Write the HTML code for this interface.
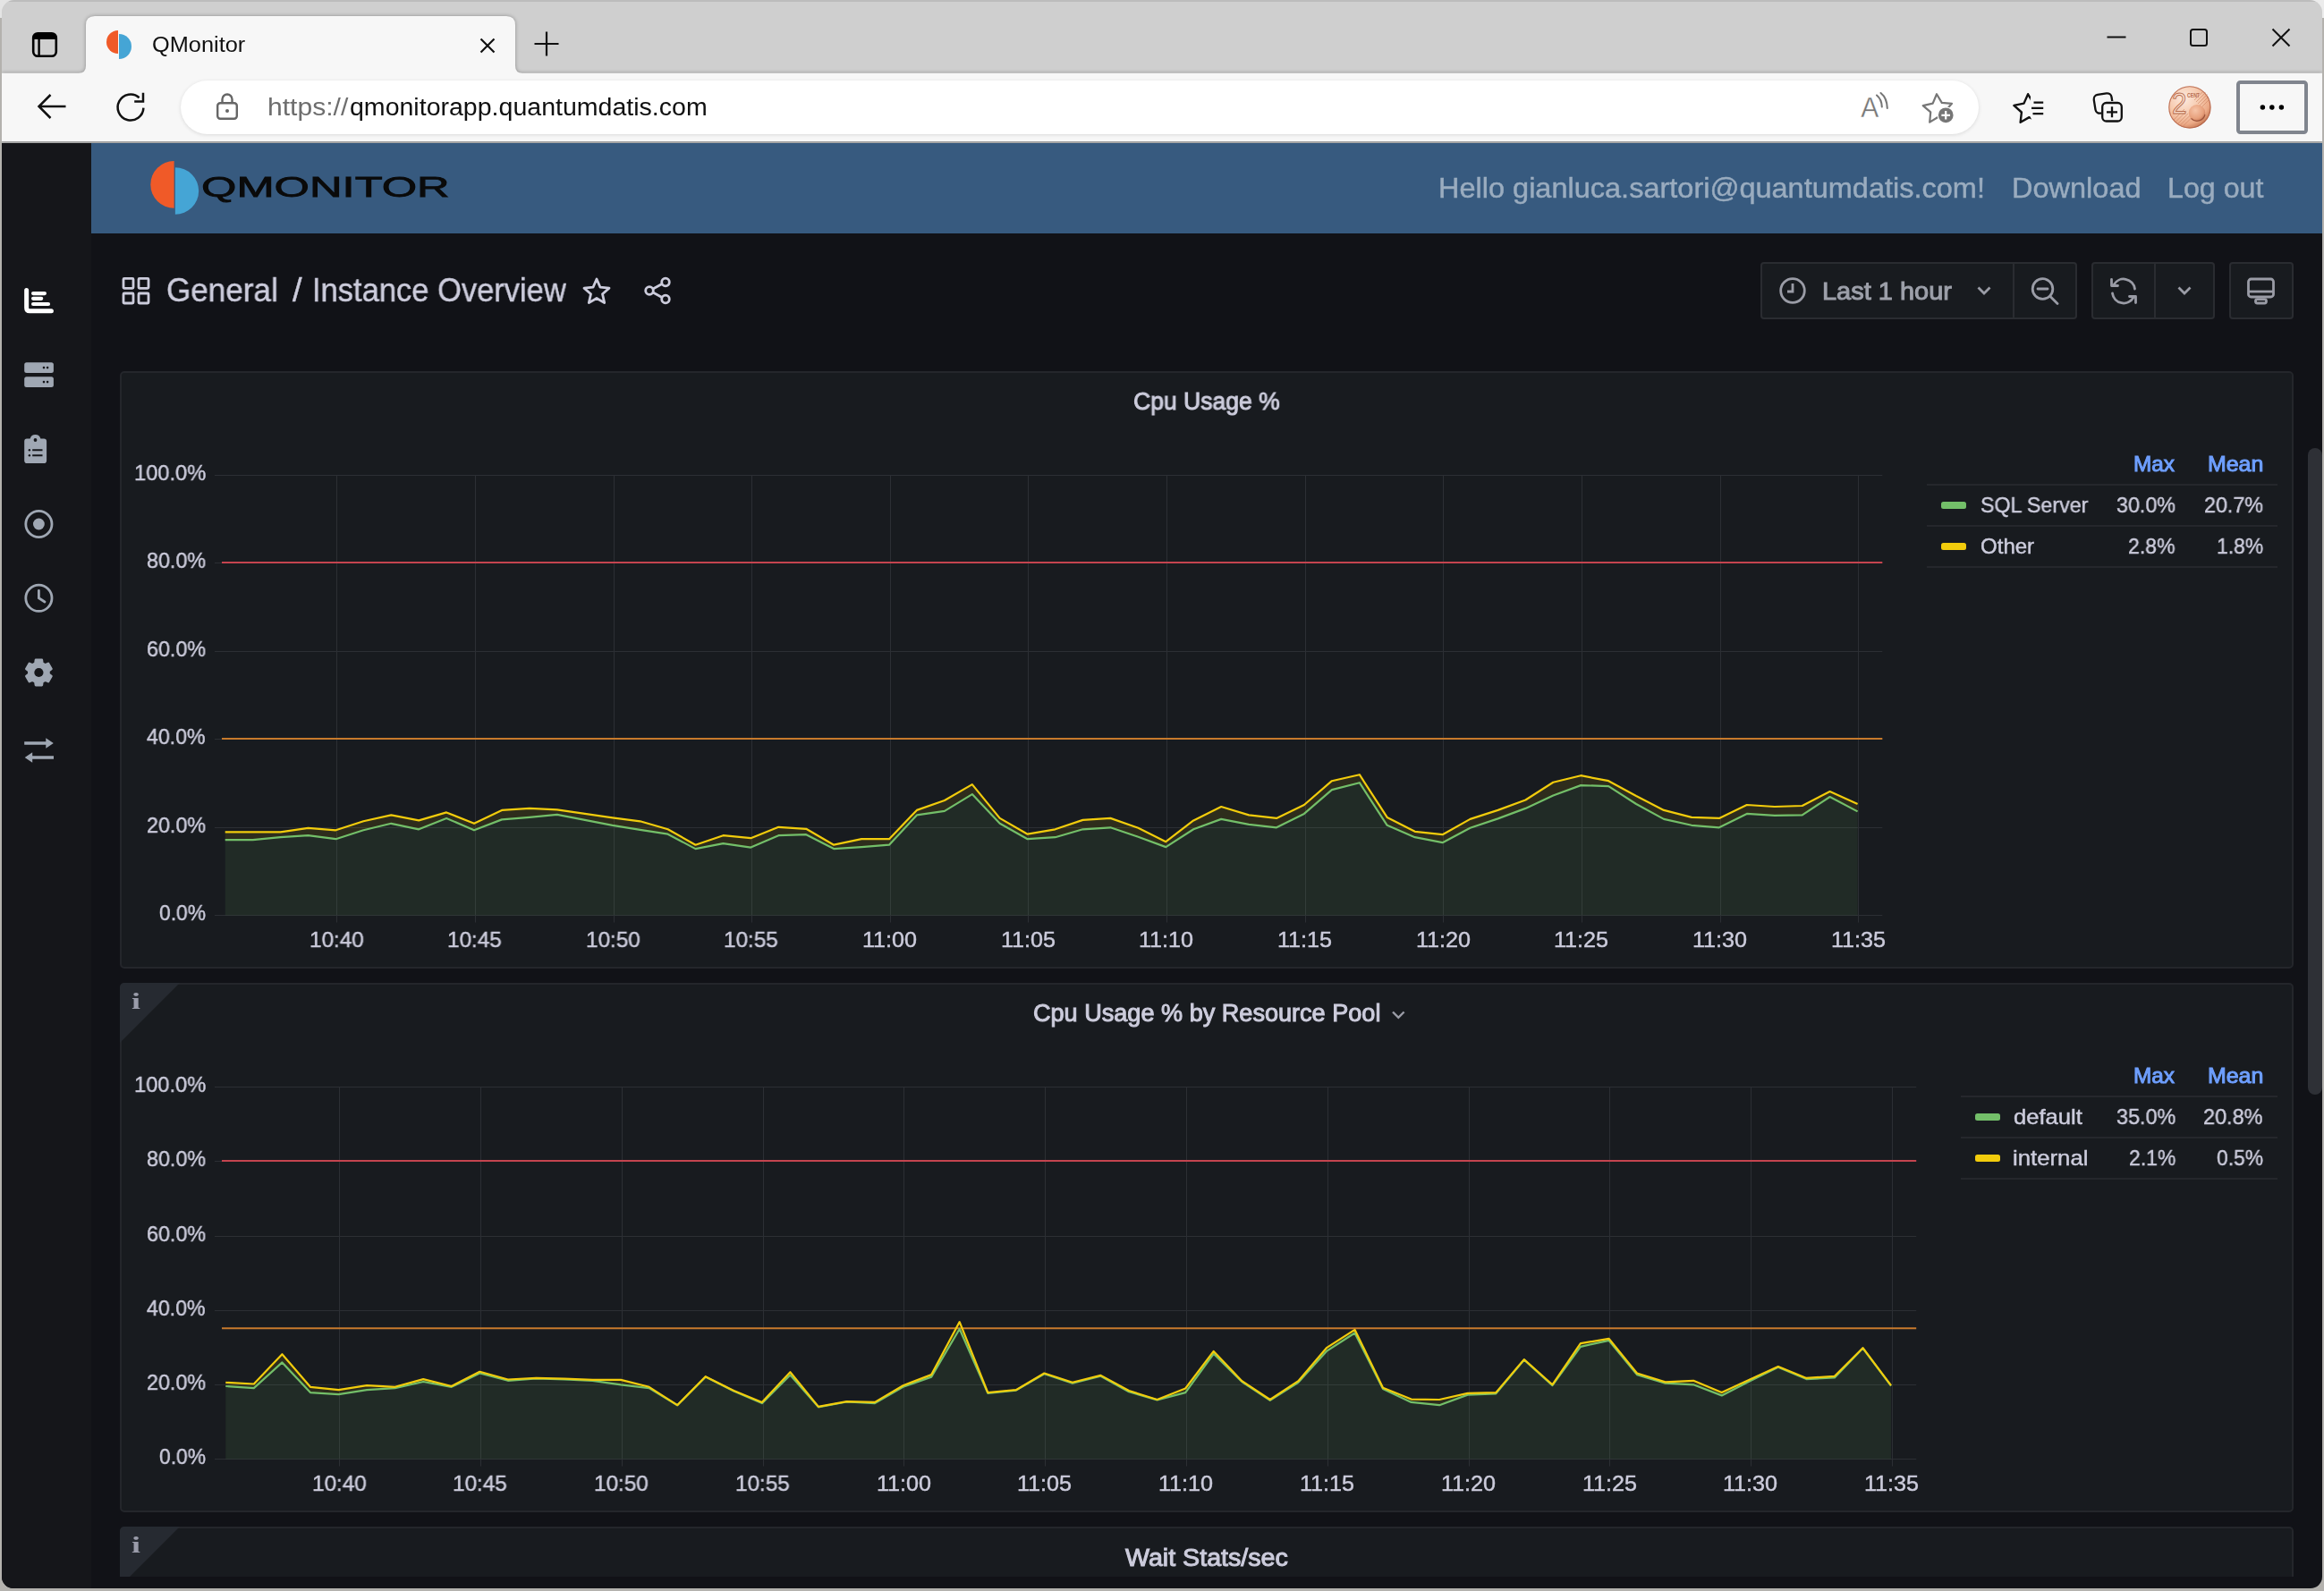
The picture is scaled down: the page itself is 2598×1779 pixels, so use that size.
<!DOCTYPE html>
<html lang="en"><head><meta charset="utf-8"><title>QMonitor</title>
<style>
html,body{margin:0;padding:0;}
body{width:2598px;height:1779px;position:relative;overflow:hidden;background:#b4b2ae;font-family:"Liberation Sans", Arial, sans-serif;}
.a{position:absolute;display:block;}
.t{position:absolute;white-space:nowrap;line-height:1;will-change:transform;}
</style></head>
<body>
<div class="a" style="left:0.0px;top:0.0px;width:20.0px;height:20.0px;background:#e4e4e4;"></div>
<div class="a" style="left:2578.0px;top:0.0px;width:20.0px;height:20.0px;background:#ececec;"></div>
<div class="a" id="win" style="left:2px;top:0;width:2594px;height:1776px;border-radius:14px 14px 13px 13px;overflow:hidden;background:linear-gradient(#bcbcbc 0,#bcbcbc 2px,#cfcfcf 2px,#cfcfcf 120px,#111217 120px);"></div>
<div id="browser-chrome">
<div class="a" style="left:2.0px;top:2.0px;width:2594.0px;height:80.0px;background:#cfcfcf;border-radius:13px 13px 0 0;"></div>
<div class="a" style="left:2.0px;top:158.0px;width:2594.0px;height:2.0px;background:#b9b9b9;"></div>
<svg class="a" style="left:2.0px;top:14.0px;overflow:hidden;" width="2594" height="146" viewBox="0 0 2594 146"><path d="M0 67.7 H86 Q94 67.7 94 59.7 V14 Q94 4 104 4 H564 Q574 4 574 14 V59.7 Q574 67.7 582 67.7 H2594 V144 H0 Z" fill="#f7f7f7" style="filter:drop-shadow(0 0 2.2px rgba(0,0,0,.33))"/></svg>
<svg class="a" style="left:34.0px;top:34.0px;" width="32" height="32" viewBox="0 0 32 32"><rect x="3.2" y="3.2" width="25.6" height="25.6" rx="5" fill="none" stroke="#000" stroke-width="2.6"/><path d="M3 10 L3 8 Q3 3 8 3 L24 3 Q29 3 29 8 L29 10 Z" fill="#000"/><line x1="9.6" y1="9" x2="9.6" y2="28" stroke="#000" stroke-width="2.4"/></svg>
<svg class="a" style="left:116.0px;top:30.0px;" width="36" height="40" viewBox="0 0 36 40"><path d="M16 4 A13 13 0 0 0 16 30 Z" fill="#f05a28"/><path d="M17 8 A13.5 13.5 0 0 1 17 36 Z" fill="#45a5d5"/></svg>
<div id="t1" class="t" style="left:169.52px;transform-origin:0 0;top:39px;font-size:23.5px;color:#111;font-weight:400;transform:scaleX(1.0785);">QMonitor</div>
<svg class="a" style="left:535.0px;top:41.0px;" width="20" height="20" viewBox="0 0 20 20"><path d="M2.5 2.5 L17.5 17.5 M17.5 2.5 L2.5 17.5" stroke="#111" stroke-width="2.2" fill="none"/></svg>
<svg class="a" style="left:596.0px;top:34.0px;" width="30" height="30" viewBox="0 0 30 30"><path d="M15 1.5 V28.5 M1.5 15 H28.5" stroke="#111" stroke-width="2.2" fill="none"/></svg>
<svg class="a" style="left:2354.0px;top:30.0px;" width="24" height="24" viewBox="0 0 24 24"><path d="M1.5 11.5 H22.5" stroke="#111" stroke-width="2" fill="none"/></svg>
<svg class="a" style="left:2446.0px;top:30.0px;" width="24" height="24" viewBox="0 0 24 24"><rect x="3" y="3" width="18" height="18" rx="2.5" stroke="#111" stroke-width="2" fill="none"/></svg>
<svg class="a" style="left:2538.0px;top:30.0px;" width="24" height="24" viewBox="0 0 24 24"><path d="M2.5 2.5 L21.5 21.5 M21.5 2.5 L2.5 21.5" stroke="#111" stroke-width="2" fill="none"/></svg>
<svg class="a" style="left:40.0px;top:103.0px;" width="36" height="32" viewBox="0 0 36 32"><path d="M33.5 16 H3.5 M16.5 3 L3.5 16 L16.5 29" stroke="#111" stroke-width="2.5" fill="none" stroke-linejoin="miter"/></svg>
<svg class="a" style="left:128.0px;top:102.0px;" width="38" height="38" viewBox="0 0 38 38"><path d="M32.4 18.6 A14.4 14.4 0 1 1 27.6 7.3" stroke="#111" stroke-width="2.5" fill="none"/><path d="M22.2 11.6 H32 V1.8" stroke="#111" stroke-width="2.5" fill="none"/></svg>
<div class="a" style="left:202.0px;top:90.0px;width:2010.0px;height:60.0px;background:#ffffff;border-radius:30px;box-shadow:0 1px 4px rgba(0,0,0,.12);"></div>
<svg class="a" style="left:240.0px;top:103.0px;" width="28" height="32" viewBox="0 0 28 32"><rect x="3.2" y="12.2" width="21.6" height="17.6" rx="3" stroke="#666" stroke-width="2.4" fill="none"/><path d="M8.5 12 V8 A5.5 5.5 0 0 1 19.5 8 V12" stroke="#666" stroke-width="2.4" fill="none"/><circle cx="14" cy="21" r="2" fill="#666"/></svg>
<div id="t2" class="t" style="left:299.17px;transform-origin:0 0;top:107px;font-size:27px;color:#6e6e6e;font-weight:400;transform:scaleX(1.1139);">https://</div>
<div id="t3" class="t" style="left:390.94px;transform-origin:0 0;top:107px;font-size:27px;color:#101010;font-weight:400;transform:scaleX(1.0567);">qmonitorapp.quantumdatis.com</div>
<svg class="a" style="left:2076.0px;top:100.0px;" width="40" height="38" viewBox="0 0 40 38"><text x="4.2" y="31.3" font-family="Liberation Sans, sans-serif" font-size="32" fill="#767676" stroke="#fff" stroke-width="0.35" textLength="20" lengthAdjust="spacingAndGlyphs">A</text><path d="M22 6.5 Q27.5 11 27.8 19.5 M26.5 4 Q33.5 9.5 33.8 21" stroke="#767676" stroke-width="2.1" fill="none" stroke-linecap="round"/></svg>
<svg class="a" style="left:2146.0px;top:100.0px;" width="42" height="42" viewBox="0 0 42 42"><path d="M19.01 5.24 L24.76 14.91 L35.96 15.83 L28.54 24.28 L31.13 35.22 L20.80 30.78 L11.19 36.62 L12.23 25.42 L3.70 18.09 L14.67 15.61 Z" stroke="#767676" stroke-width="2.2" fill="none" stroke-linejoin="round"/><circle cx="29.2" cy="28.8" r="9.6" fill="#fff"/><circle cx="29.2" cy="28.8" r="8.4" fill="#767676"/><path d="M29.2 24 V33.6 M24.4 28.8 H34" stroke="#fff" stroke-width="2.2" fill="none"/></svg>
<svg class="a" style="left:2248.0px;top:100.0px;" width="42" height="40" viewBox="0 0 42 40"><defs><clipPath id="fvc"><path d="M0 0 H26.5 L22 9 L20 27 L26 40 H0 Z"/></clipPath></defs><path d="M19.10 5.22 L24.74 15.10 L36.06 16.24 L28.40 24.65 L30.82 35.77 L20.46 31.09 L10.63 36.83 L11.88 25.52 L3.39 17.95 L14.52 15.64 Z" stroke="#111" stroke-width="2.4" fill="none" stroke-linejoin="round" clip-path="url(#fvc)"/><path d="M25.5 14.6 H36.2 M23 20.9 H36.2 M24.5 27.2 H36.2" stroke="#111" stroke-width="2.3" fill="none"/></svg>
<svg class="a" style="left:2337.0px;top:100.0px;" width="40" height="40" viewBox="0 0 40 40"><rect x="4.5" y="5" width="20" height="21" rx="5" transform="rotate(-9 14.5 15.5)" stroke="#111" stroke-width="2.3" fill="none"/><rect x="12" y="13" width="24" height="23.5" rx="5.5" fill="#f7f7f7"/><rect x="13.2" y="15" width="21.6" height="20.5" rx="4.5" stroke="#111" stroke-width="2.3" fill="#f7f7f7"/><path d="M24 19.3 V31.3 M18 25.3 H30" stroke="#111" stroke-width="2.3" fill="none"/></svg>
<svg class="a" style="left:2420.0px;top:92.0px;" width="56" height="56" viewBox="0 0 56 56"><defs><radialGradient id="cg" cx="36%" cy="30%" r="75%"><stop offset="0" stop-color="#fdeadf"/><stop offset="0.5" stop-color="#f6c9ad"/><stop offset="0.8" stop-color="#ecab88"/><stop offset="0.95" stop-color="#d08560"/><stop offset="1" stop-color="#a8573d"/></radialGradient><radialGradient id="gg" cx="40%" cy="35%" r="70%"><stop offset="0" stop-color="#f6c4a8"/><stop offset="0.7" stop-color="#e7a07c"/><stop offset="1" stop-color="#c47655"/></radialGradient></defs><circle cx="27.9" cy="27.9" r="23.6" fill="url(#cg)"/><circle cx="27.9" cy="27.9" r="23.1" fill="none" stroke="#b4644a" stroke-width="1.1" opacity=".85"/><g stroke="#c77c5b" stroke-width="0.7" opacity=".75"><path d="M33 20 L43 10 M35 22 L45.5 11.5 M37 24 L47.5 13.5 M39 26 L49 16 M41 28 L50 19 M10 42 L22 30 M12.5 44 L24 32.5 M15 46 L26 35 M17.5 47.8 L28 37.3 M20 49.5 L30 39.5"/></g><circle cx="36" cy="34.2" r="9.2" fill="url(#gg)"/><path d="M29.5 40.5 A9.2 9.2 0 0 0 45 36" stroke="#8f4630" stroke-width="1.2" fill="none" opacity=".8"/><text x="8" y="34.6" font-family="Liberation Sans, sans-serif" font-size="34" fill="#fbe0d0" fill-opacity=".8" stroke="#b76c4d" stroke-width="1" textLength="16.5" lengthAdjust="spacingAndGlyphs">2</text><text x="25" y="17" font-family="Liberation Sans, sans-serif" font-size="8" font-weight="700" fill="#b76c4d" textLength="14" lengthAdjust="spacingAndGlyphs">CENT</text></svg>
<div class="a" style="left:2500.0px;top:90.0px;width:80.0px;height:60.0px;background:transparent;border:4px solid #80858e;box-sizing:border-box;border-radius:4.5px;"></div>
<svg class="a" style="left:2520.0px;top:113.0px;" width="40" height="14" viewBox="0 0 40 14"><circle cx="9.4" cy="7" r="2.75" fill="#000"/><circle cx="19.8" cy="7" r="2.75" fill="#000"/><circle cx="30.4" cy="7" r="2.75" fill="#000"/></svg>
</div>
<div id="app">
<nav id="sidebar" aria-label="Main menu">
<div class="a" style="left:2.0px;top:160.0px;width:100.0px;height:1616.0px;background:#15161a;border-radius:0 0 0 13px;"></div>
<svg class="a" style="left:26.0px;top:320.0px;" width="36" height="32" viewBox="0 0 36 32"><path d="M3.65 4.4 V24.2 Q3.65 27.76 7.2 27.76 H31.4" stroke="#fff" stroke-width="5" fill="none" stroke-linecap="round"/><path d="M11.1 8.07 H23.9 M11.1 13.8 H20.2 M11.1 20 H28" stroke="#fff" stroke-width="4.2" fill="none" stroke-linecap="round"/></svg>
<svg class="a" style="left:26.0px;top:404.0px;" width="36" height="30" viewBox="0 0 36 30"><rect x="1.2" y="1.2" width="32.7" height="11.8" rx="2.5" fill="#9fa7b3"/><rect x="1.2" y="17.2" width="32.7" height="11.9" rx="2.5" fill="#9fa7b3"/><circle cx="23" cy="7.1" r="1.3" fill="#15161a"/><circle cx="27.1" cy="7.1" r="1.3" fill="#15161a"/><circle cx="23" cy="23.1" r="1.3" fill="#15161a"/><circle cx="27.1" cy="23.1" r="1.3" fill="#15161a"/></svg>
<svg class="a" style="left:26.0px;top:485.0px;" width="28" height="34" viewBox="0 0 28 34"><path d="M4 5.4 H7.6 A6.2 6.2 0 0 1 19.4 5.4 H23 Q26.1 5.4 26.1 8.5 V29.9 Q26.1 33 23 33 H4.3 Q1.2 33 1.2 29.9 V8.5 Q1.2 5.4 4 5.4 Z" fill="#9fa7b3"/><circle cx="13.5" cy="7" r="1.9" fill="#15161a"/><circle cx="6.9" cy="18.3" r="1.2" fill="#15161a"/><circle cx="6.9" cy="24.3" r="1.2" fill="#15161a"/><path d="M10.2 18.3 H21.5 M10.2 24.3 H21.5" stroke="#15161a" stroke-width="2.1" fill="none"/></svg>
<svg class="a" style="left:26.0px;top:569.0px;" width="36" height="36" viewBox="0 0 36 36"><circle cx="17.4" cy="17" r="14.6" stroke="#9fa7b3" stroke-width="2.8" fill="none"/><circle cx="17.4" cy="17" r="6.4" fill="#9fa7b3"/></svg>
<svg class="a" style="left:26.0px;top:652.0px;" width="36" height="36" viewBox="0 0 36 36"><circle cx="17.4" cy="16.8" r="14.6" stroke="#9fa7b3" stroke-width="2.8" fill="none"/><path d="M17.4 8.3 V16.8 L24 21" stroke="#9fa7b3" stroke-width="2.8" fill="none" stroke-linecap="round"/></svg>
<svg class="a" style="left:26.0px;top:734.0px;" width="36" height="36" viewBox="0 0 36 36"><path d="M13.45 7.52 L13.96 3.81 L20.84 3.81 L21.35 7.52 L24.50 9.34 L27.97 7.93 L31.41 13.88 L28.45 16.18 L28.45 19.82 L31.41 22.12 L27.97 28.07 L24.50 26.66 L21.35 28.48 L20.84 32.19 L13.96 32.19 L13.45 28.48 L10.30 26.66 L6.83 28.07 L3.39 22.12 L6.35 19.82 L6.35 16.18 L3.39 13.88 L6.83 7.93 L10.30 9.34 Z" fill="#9fa7b3" stroke="#9fa7b3" stroke-width="2.6" stroke-linejoin="round"/><circle cx="17.4" cy="18" r="5.1" fill="#15161a"/></svg>
<svg class="a" style="left:26.0px;top:824.0px;" width="36" height="32" viewBox="0 0 36 32"><path d="M1.2 7 H27 M9 23 H34" stroke="#9fa7b3" stroke-width="3.4" fill="none"/><path d="M25.3 1.2 L33.8 7 L25.3 12.8 Z M10.2 17.2 L1.7 23 L10.2 28.8 Z" fill="#9fa7b3"/></svg>
</nav>
<header id="topnav">
<div class="a" style="left:102.0px;top:160.0px;width:2494.0px;height:100.6px;background:#375a7f;"></div>
<svg class="a" style="left:160.0px;top:174.0px;" width="70" height="72" viewBox="0 0 70 72"><path d="M34.6 6.1 A26.3 26.3 0 0 0 34.6 58.7 Z" fill="#f05a28"/><path d="M35.9 13.3 A26.2 26.2 0 0 1 35.9 65.8 Z" fill="#45a5d5"/></svg>
<div id="t4" class="t" style="left:224.78px;transform-origin:0 0;top:194px;font-size:31.2px;color:#0a0a0a;font-weight:400;transform:scaleX(1.6243);-webkit-text-stroke:0.8px #0a0a0a;">QMONITOR</div>
<div id="t5" class="t" style="left:1608.16px;transform-origin:0 0;top:194px;font-size:32px;color:#9aacbf;font-weight:400;transform:scaleX(1.0154);-webkit-text-stroke:0.45px #9aacbf;">Hello gianluca.sartori@quantumdatis.com!</div>
<div id="t6" class="t" style="left:2248.96px;transform-origin:0 0;top:194px;font-size:32px;color:#9aacbf;font-weight:400;transform:scaleX(1.0159);-webkit-text-stroke:0.45px #9aacbf;">Download</div>
<div id="t7" class="t" style="left:2422.89px;transform-origin:0 0;top:194px;font-size:32px;color:#9aacbf;font-weight:400;transform:scaleX(1.0057);-webkit-text-stroke:0.45px #9aacbf;">Log out</div>
</header>
<div id="dashboard-toolbar">
<svg class="a" style="left:135.0px;top:308.0px;" width="34" height="34" viewBox="0 0 34 34"><g fill="none" stroke="#ccccdc" stroke-width="2.8"><rect x="3" y="3.3" width="11" height="11" rx="1"/><rect x="20" y="3.3" width="11" height="11" rx="1"/><rect x="3" y="20" width="11" height="11" rx="1"/><rect x="20" y="20" width="11" height="11" rx="1"/></g></svg>
<div id="t8" class="t" style="left:185.88px;transform-origin:0 0;top:306px;font-size:37px;color:#ccccdc;font-weight:400;transform:scaleX(0.9477);-webkit-text-stroke:0.45px #ccccdc;">General</div>
<div id="t9" class="t" style="left:327.31px;transform-origin:0 0;top:306px;font-size:37px;color:#ccccdc;font-weight:400;transform:scaleX(1.0273);-webkit-text-stroke:0.45px #ccccdc;">/</div>
<div id="t10" class="t" style="left:348.70px;transform-origin:0 0;top:306px;font-size:37px;color:#ccccdc;font-weight:400;transform:scaleX(0.9323);-webkit-text-stroke:0.45px #ccccdc;">Instance Overview</div>
<svg class="a" style="left:650.0px;top:308.0px;" width="34" height="34" viewBox="0 0 34 34"><path d="M17 4 L21 13.2 L31 14.2 L23.5 20.8 L25.7 30.6 L17 25.5 L8.3 30.6 L10.5 20.8 L3 14.2 L13 13.2 Z" stroke="#ccccdc" stroke-width="2.8" fill="none" stroke-linejoin="round"/></svg>
<svg class="a" style="left:718.0px;top:308.0px;" width="34" height="34" viewBox="0 0 34 34"><g stroke="#ccccdc" stroke-width="2.8" fill="none"><circle cx="26" cy="7.5" r="4.3"/><circle cx="8" cy="17" r="4.3"/><circle cx="26" cy="26.5" r="4.3"/><path d="M12 15 L22 9.6 M12 19 L22 24.4"/></g></svg>
<div class="a" style="left:1968.0px;top:293.0px;width:354.0px;height:63.5px;background:#181b1f;border:2px solid #2a2c31;box-sizing:border-box;background:#181b1f;border-radius:4px;"></div>
<div class="a" style="left:2250.0px;top:293.0px;width:2.0px;height:63.5px;background:#2a2c31;"></div>
<div class="a" style="left:2338.0px;top:293.0px;width:137.6px;height:63.5px;background:#181b1f;border:2px solid #2a2c31;box-sizing:border-box;background:#181b1f;border-radius:4px;"></div>
<div class="a" style="left:2408.0px;top:293.0px;width:2.0px;height:63.5px;background:#2a2c31;"></div>
<div class="a" style="left:2492.0px;top:293.0px;width:72.0px;height:63.5px;background:#181b1f;border:2px solid #2a2c31;box-sizing:border-box;background:#181b1f;border-radius:4px;"></div>
<svg class="a" style="left:1987.0px;top:309.0px;" width="34" height="34" viewBox="0 0 34 34"><circle cx="17" cy="16" r="13.3" stroke="#9a9ca6" stroke-width="2.8" fill="none"/><path d="M17 8 V17 H11" stroke="#9a9ca6" stroke-width="2.8" fill="none"/></svg>
<div id="t11" class="t" style="left:2036.63px;transform-origin:0 0;top:312px;font-size:28px;color:#9da0aa;font-weight:400;transform:scaleX(1.0341);-webkit-text-stroke:1.0px #9da0aa;">Last 1 hour</div>
<svg class="a" style="left:2208.0px;top:316.0px;" width="20" height="18" viewBox="0 0 20 18"><path d="M3.5 5.5 L10 12 L16.5 5.5" stroke="#9a9ca6" stroke-width="2.8" fill="none"/></svg>
<svg class="a" style="left:2269.0px;top:309.0px;" width="34" height="34" viewBox="0 0 34 34"><circle cx="14.5" cy="14" r="11.3" stroke="#9a9ca6" stroke-width="2.8" fill="none"/><path d="M9 14 H20 M23 22.5 L31 30.5" stroke="#9a9ca6" stroke-width="2.8" fill="none" stroke-linecap="round"/></svg>
<svg class="a" style="left:2357.0px;top:309.0px;" width="34" height="34" viewBox="0 0 34 34"><g stroke="#9a9ca6" stroke-width="2.8" fill="none" stroke-linecap="round" stroke-linejoin="round"><path d="M29.5 14 A12.6 12.6 0 0 0 6 9.5"/><path d="M3.5 3.5 V10.5 H10.5"/><path d="M4.5 19 A12.6 12.6 0 0 0 28 23.5"/><path d="M30.5 29.5 V22.5 H23.5"/></g></svg>
<svg class="a" style="left:2432.0px;top:316.0px;" width="20" height="18" viewBox="0 0 20 18"><path d="M3.5 5.5 L10 12 L16.5 5.5" stroke="#9a9ca6" stroke-width="2.8" fill="none"/></svg>
<svg class="a" style="left:2511.0px;top:309.0px;" width="34" height="34" viewBox="0 0 34 34"><g stroke="#9a9ca6" stroke-width="2.8" fill="none" stroke-linejoin="round"><rect x="2.5" y="3" width="28" height="20" rx="3"/><path d="M2.5 17 H30.5"/><rect x="10.5" y="25.6" width="12" height="4.4" rx="2"/></g></svg>
</div>
<div class="a" style="left:2580.0px;top:500.5px;width:15.5px;height:723.0px;background:#2e3036;border-radius:8px;"></div>
<main id="dashboard">
<section class="panel" aria-label="Cpu Usage %">
<div class="a" style="left:134.0px;top:415.0px;width:2430.0px;height:668.0px;background:#181b1f;border:2px solid #24262b;box-sizing:border-box;border-radius:5px;"></div>
<div id="t12" class="t" style="left:1266.82px;transform-origin:0 0;top:436px;font-size:27px;color:#ccccdc;font-weight:400;transform:scaleX(0.9830);-webkit-text-stroke:1.0px #ccccdc;">Cpu Usage %</div>
<svg class="a" style="left:0;top:0" width="2598" height="1779" viewBox="0 0 2598 1779"><path d="M240 1023.5 H2104.3" stroke="#2c2f34" stroke-width="1.1"/><path d="M240 925.5 H2104.3" stroke="#2c2f34" stroke-width="1.1"/><path d="M240 826.5 H2104.3" stroke="#2c2f34" stroke-width="1.1"/><path d="M240 728.5 H2104.3" stroke="#2c2f34" stroke-width="1.1"/><path d="M240 629.5 H2104.3" stroke="#2c2f34" stroke-width="1.1"/><path d="M240 531.5 H2104.3" stroke="#2c2f34" stroke-width="1.1"/><path d="M376.5 531.3 V1031.6" stroke="#2c2f34" stroke-width="1.1"/><path d="M531.5 531.3 V1031.6" stroke="#2c2f34" stroke-width="1.1"/><path d="M686.5 531.3 V1031.6" stroke="#2c2f34" stroke-width="1.1"/><path d="M840.5 531.3 V1031.6" stroke="#2c2f34" stroke-width="1.1"/><path d="M995.5 531.3 V1031.6" stroke="#2c2f34" stroke-width="1.1"/><path d="M1149.5 531.3 V1031.6" stroke="#2c2f34" stroke-width="1.1"/><path d="M1304.5 531.3 V1031.6" stroke="#2c2f34" stroke-width="1.1"/><path d="M1459.5 531.3 V1031.6" stroke="#2c2f34" stroke-width="1.1"/><path d="M1613.5 531.3 V1031.6" stroke="#2c2f34" stroke-width="1.1"/><path d="M1768.5 531.3 V1031.6" stroke="#2c2f34" stroke-width="1.1"/><path d="M1923.5 531.3 V1031.6" stroke="#2c2f34" stroke-width="1.1"/><path d="M2077.5 531.3 V1031.6" stroke="#2c2f34" stroke-width="1.1"/><path d="M251.7 1023.6 L251.7 939.2 L282.6 939.2 L313.5 936.2 L344.5 934.2 L375.4 938.2 L406.3 928.3 L437.3 920.8 L468.2 927.3 L499.1 914.9 L530.0 928.3 L561.0 916.4 L591.9 913.9 L622.8 910.9 L653.8 916.9 L684.7 922.8 L715.6 927.8 L746.6 932.7 L777.5 949.1 L808.4 943.2 L839.3 947.6 L870.3 934.2 L901.2 933.2 L932.1 949.1 L963.1 947.1 L994.0 944.7 L1024.9 911.4 L1055.9 906.9 L1086.8 888.1 L1117.7 920.8 L1148.7 938.2 L1179.6 936.2 L1210.5 927.3 L1241.4 925.3 L1272.4 935.7 L1303.3 947.1 L1334.2 927.3 L1365.2 915.9 L1396.1 921.8 L1427.0 925.3 L1457.9 909.9 L1488.9 883.1 L1519.8 875.2 L1550.7 922.8 L1581.7 936.2 L1612.6 942.2 L1643.5 925.8 L1674.5 915.4 L1705.4 903.9 L1736.3 889.5 L1767.2 878.1 L1798.2 879.1 L1829.1 899.0 L1860.0 915.9 L1891.0 922.8 L1921.9 925.3 L1952.8 909.9 L1983.8 911.9 L2014.7 911.4 L2045.6 891.0 L2076.6 907.4 L2076.6 1023.6 Z" fill="#73bf69" fill-opacity="0.1"/><path d="M251.7 939.2 L282.6 939.2 L313.5 936.2 L344.5 934.2 L375.4 938.2 L406.3 928.3 L437.3 920.8 L468.2 927.3 L499.1 914.9 L530.0 928.3 L561.0 916.4 L591.9 913.9 L622.8 910.9 L653.8 916.9 L684.7 922.8 L715.6 927.8 L746.6 932.7 L777.5 949.1 L808.4 943.2 L839.3 947.6 L870.3 934.2 L901.2 933.2 L932.1 949.1 L963.1 947.1 L994.0 944.7 L1024.9 911.4 L1055.9 906.9 L1086.8 888.1 L1117.7 920.8 L1148.7 938.2 L1179.6 936.2 L1210.5 927.3 L1241.4 925.3 L1272.4 935.7 L1303.3 947.1 L1334.2 927.3 L1365.2 915.9 L1396.1 921.8 L1427.0 925.3 L1457.9 909.9 L1488.9 883.1 L1519.8 875.2 L1550.7 922.8 L1581.7 936.2 L1612.6 942.2 L1643.5 925.8 L1674.5 915.4 L1705.4 903.9 L1736.3 889.5 L1767.2 878.1 L1798.2 879.1 L1829.1 899.0 L1860.0 915.9 L1891.0 922.8 L1921.9 925.3 L1952.8 909.9 L1983.8 911.9 L2014.7 911.4 L2045.6 891.0 L2076.6 907.4 L2076.6 899.0 L2045.6 885.1 L2014.7 901.0 L1983.8 902.0 L1952.8 900.0 L1921.9 914.9 L1891.0 913.9 L1860.0 905.9 L1829.1 890.0 L1798.2 873.2 L1767.2 867.2 L1736.3 874.7 L1705.4 894.5 L1674.5 905.9 L1643.5 915.9 L1612.6 933.2 L1581.7 929.8 L1550.7 913.9 L1519.8 866.2 L1488.9 873.2 L1457.9 900.0 L1427.0 914.9 L1396.1 911.4 L1365.2 902.0 L1334.2 917.4 L1303.3 941.2 L1272.4 925.8 L1241.4 914.9 L1210.5 916.9 L1179.6 927.3 L1148.7 932.7 L1117.7 914.9 L1086.8 877.1 L1055.9 895.0 L1024.9 905.9 L994.0 938.2 L963.1 938.2 L932.1 944.7 L901.2 926.8 L870.3 924.8 L839.3 937.2 L808.4 934.2 L777.5 944.7 L746.6 927.3 L715.6 918.3 L684.7 914.4 L653.8 909.9 L622.8 905.4 L591.9 903.9 L561.0 905.9 L530.0 920.8 L499.1 908.4 L468.2 917.4 L437.3 911.4 L406.3 918.3 L375.4 928.3 L344.5 925.8 L313.5 930.3 L282.6 930.3 L251.7 930.3 Z" fill="#f2cc0c" fill-opacity="0.1"/><path d="M248.0 629.0 H2104.3" stroke="#c4444f" stroke-width="2"/><path d="M248.0 825.9 H2104.3" stroke="#c77a2c" stroke-width="2"/><path d="M251.7 939.2 L282.6 939.2 L313.5 936.2 L344.5 934.2 L375.4 938.2 L406.3 928.3 L437.3 920.8 L468.2 927.3 L499.1 914.9 L530.0 928.3 L561.0 916.4 L591.9 913.9 L622.8 910.9 L653.8 916.9 L684.7 922.8 L715.6 927.8 L746.6 932.7 L777.5 949.1 L808.4 943.2 L839.3 947.6 L870.3 934.2 L901.2 933.2 L932.1 949.1 L963.1 947.1 L994.0 944.7 L1024.9 911.4 L1055.9 906.9 L1086.8 888.1 L1117.7 920.8 L1148.7 938.2 L1179.6 936.2 L1210.5 927.3 L1241.4 925.3 L1272.4 935.7 L1303.3 947.1 L1334.2 927.3 L1365.2 915.9 L1396.1 921.8 L1427.0 925.3 L1457.9 909.9 L1488.9 883.1 L1519.8 875.2 L1550.7 922.8 L1581.7 936.2 L1612.6 942.2 L1643.5 925.8 L1674.5 915.4 L1705.4 903.9 L1736.3 889.5 L1767.2 878.1 L1798.2 879.1 L1829.1 899.0 L1860.0 915.9 L1891.0 922.8 L1921.9 925.3 L1952.8 909.9 L1983.8 911.9 L2014.7 911.4 L2045.6 891.0 L2076.6 907.4" fill="none" stroke="#73bf69" stroke-width="2.2" stroke-linejoin="round"/><path d="M251.7 930.3 L282.6 930.3 L313.5 930.3 L344.5 925.8 L375.4 928.3 L406.3 918.3 L437.3 911.4 L468.2 917.4 L499.1 908.4 L530.0 920.8 L561.0 905.9 L591.9 903.9 L622.8 905.4 L653.8 909.9 L684.7 914.4 L715.6 918.3 L746.6 927.3 L777.5 944.7 L808.4 934.2 L839.3 937.2 L870.3 924.8 L901.2 926.8 L932.1 944.7 L963.1 938.2 L994.0 938.2 L1024.9 905.9 L1055.9 895.0 L1086.8 877.1 L1117.7 914.9 L1148.7 932.7 L1179.6 927.3 L1210.5 916.9 L1241.4 914.9 L1272.4 925.8 L1303.3 941.2 L1334.2 917.4 L1365.2 902.0 L1396.1 911.4 L1427.0 914.9 L1457.9 900.0 L1488.9 873.2 L1519.8 866.2 L1550.7 913.9 L1581.7 929.8 L1612.6 933.2 L1643.5 915.9 L1674.5 905.9 L1705.4 894.5 L1736.3 874.7 L1767.2 867.2 L1798.2 873.2 L1829.1 890.0 L1860.0 905.9 L1891.0 913.9 L1921.9 914.9 L1952.8 900.0 L1983.8 902.0 L2014.7 901.0 L2045.6 885.1 L2076.6 899.0" fill="none" stroke="#f2cc0c" stroke-width="2.2" stroke-linejoin="round"/></svg>
<div id="t13" class="t" style="left:177.94px;transform-origin:0 0;top:1009px;font-size:24.6px;color:#ccccdc;font-weight:400;transform:scaleX(0.9273);-webkit-text-stroke:0.45px #ccccdc;">0.0%</div>
<div id="t14" class="t" style="left:163.95px;transform-origin:0 0;top:911px;font-size:24.6px;color:#ccccdc;font-weight:400;transform:scaleX(0.9485);-webkit-text-stroke:0.45px #ccccdc;">20.0%</div>
<div id="t15" class="t" style="left:164.43px;transform-origin:0 0;top:812px;font-size:24.6px;color:#ccccdc;font-weight:400;transform:scaleX(0.9416);-webkit-text-stroke:0.45px #ccccdc;">40.0%</div>
<div id="t16" class="t" style="left:163.95px;transform-origin:0 0;top:714px;font-size:24.6px;color:#ccccdc;font-weight:400;transform:scaleX(0.9485);-webkit-text-stroke:0.45px #ccccdc;">60.0%</div>
<div id="t17" class="t" style="left:163.95px;transform-origin:0 0;top:615px;font-size:24.6px;color:#ccccdc;font-weight:400;transform:scaleX(0.9485);-webkit-text-stroke:0.45px #ccccdc;">80.0%</div>
<div id="t18" class="t" style="left:149.96px;transform-origin:0 0;top:517px;font-size:24.6px;color:#ccccdc;font-weight:400;transform:scaleX(0.9630);-webkit-text-stroke:0.45px #ccccdc;">100.0%</div>
<div id="t19" class="t" style="left:345.52px;transform-origin:0 0;top:1039px;font-size:24.6px;color:#ccccdc;font-weight:400;transform:scaleX(0.9882);-webkit-text-stroke:0.45px #ccccdc;">10:40</div>
<div id="t20" class="t" style="left:500.17px;transform-origin:0 0;top:1039px;font-size:24.6px;color:#ccccdc;font-weight:400;transform:scaleX(0.9882);-webkit-text-stroke:0.45px #ccccdc;">10:45</div>
<div id="t21" class="t" style="left:654.82px;transform-origin:0 0;top:1039px;font-size:24.6px;color:#ccccdc;font-weight:400;transform:scaleX(0.9882);-webkit-text-stroke:0.45px #ccccdc;">10:50</div>
<div id="t22" class="t" style="left:809.47px;transform-origin:0 0;top:1039px;font-size:24.6px;color:#ccccdc;font-weight:400;transform:scaleX(0.9882);-webkit-text-stroke:0.45px #ccccdc;">10:55</div>
<div id="t23" class="t" style="left:964.07px;transform-origin:0 0;top:1039px;font-size:24.6px;color:#ccccdc;font-weight:400;transform:scaleX(1.0226);-webkit-text-stroke:0.45px #ccccdc;">11:00</div>
<div id="t24" class="t" style="left:1118.72px;transform-origin:0 0;top:1039px;font-size:24.6px;color:#ccccdc;font-weight:400;transform:scaleX(1.0226);-webkit-text-stroke:0.45px #ccccdc;">11:05</div>
<div id="t25" class="t" style="left:1273.37px;transform-origin:0 0;top:1039px;font-size:24.6px;color:#ccccdc;font-weight:400;transform:scaleX(1.0226);-webkit-text-stroke:0.45px #ccccdc;">11:10</div>
<div id="t26" class="t" style="left:1428.02px;transform-origin:0 0;top:1039px;font-size:24.6px;color:#ccccdc;font-weight:400;transform:scaleX(1.0226);-webkit-text-stroke:0.45px #ccccdc;">11:15</div>
<div id="t27" class="t" style="left:1582.67px;transform-origin:0 0;top:1039px;font-size:24.6px;color:#ccccdc;font-weight:400;transform:scaleX(1.0226);-webkit-text-stroke:0.45px #ccccdc;">11:20</div>
<div id="t28" class="t" style="left:1737.32px;transform-origin:0 0;top:1039px;font-size:24.6px;color:#ccccdc;font-weight:400;transform:scaleX(1.0226);-webkit-text-stroke:0.45px #ccccdc;">11:25</div>
<div id="t29" class="t" style="left:1891.97px;transform-origin:0 0;top:1039px;font-size:24.6px;color:#ccccdc;font-weight:400;transform:scaleX(1.0226);-webkit-text-stroke:0.45px #ccccdc;">11:30</div>
<div id="t30" class="t" style="left:2046.62px;transform-origin:0 0;top:1039px;font-size:24.6px;color:#ccccdc;font-weight:400;transform:scaleX(1.0226);-webkit-text-stroke:0.45px #ccccdc;">11:35</div>
<div id="t31" class="t" style="left:2384.88px;transform-origin:0 0;top:507px;font-size:24px;color:#6e9fff;font-weight:400;transform:scaleX(1.0112);-webkit-text-stroke:1.0px #6e9fff;">Max</div>
<div id="t32" class="t" style="left:2467.94px;transform-origin:0 0;top:507px;font-size:24px;color:#6e9fff;font-weight:400;transform:scaleX(1.0383);-webkit-text-stroke:1.0px #6e9fff;">Mean</div>
<div class="a" style="left:2154.0px;top:541.0px;width:391.8px;height:2.0px;background:#25272c;"></div>
<div class="a" style="left:2154.0px;top:587.1px;width:391.8px;height:2.0px;background:#25272c;"></div>
<div class="a" style="left:2170.1px;top:561.0px;width:28.2px;height:8.1px;background:#73bf69;border-radius:2.5px;"></div>
<div id="t33" class="t" style="left:2213.73px;transform-origin:0 0;top:553px;font-size:24px;color:#ccccdc;font-weight:400;transform:scaleX(0.9660);-webkit-text-stroke:0.45px #ccccdc;">SQL Server</div>
<div id="t34" class="t" style="left:2366.03px;transform-origin:0 0;top:553px;font-size:24.6px;color:#ccccdc;font-weight:400;transform:scaleX(0.9474);-webkit-text-stroke:0.45px #ccccdc;">30.0%</div>
<div id="t35" class="t" style="left:2463.85px;transform-origin:0 0;top:553px;font-size:24.6px;color:#ccccdc;font-weight:400;transform:scaleX(0.9471);-webkit-text-stroke:0.45px #ccccdc;">20.7%</div>
<div class="a" style="left:2154.0px;top:632.8px;width:391.8px;height:2.0px;background:#25272c;"></div>
<div class="a" style="left:2170.1px;top:606.7px;width:28.2px;height:8.1px;background:#f2cc0c;border-radius:2.5px;"></div>
<div id="t36" class="t" style="left:2213.70px;transform-origin:0 0;top:599px;font-size:24px;color:#ccccdc;font-weight:400;transform:scaleX(1.0017);-webkit-text-stroke:0.45px #ccccdc;">Other</div>
<div id="t37" class="t" style="left:2379.46px;transform-origin:0 0;top:599px;font-size:24.6px;color:#ccccdc;font-weight:400;transform:scaleX(0.9358);-webkit-text-stroke:0.45px #ccccdc;">2.8%</div>
<div id="t38" class="t" style="left:2477.61px;transform-origin:0 0;top:599px;font-size:24.6px;color:#ccccdc;font-weight:400;transform:scaleX(0.9296);-webkit-text-stroke:0.45px #ccccdc;">1.8%</div>
</section>
<section class="panel" aria-label="Cpu Usage % by Resource Pool">
<div class="a" style="left:134.0px;top:1099.0px;width:2430.0px;height:591.5px;background:#181b1f;border:2px solid #24262b;box-sizing:border-box;border-radius:5px;"></div>
<svg class="a" style="left:134.0px;top:1099.0px;border-radius:5px 0 0 0;" width="68" height="68" viewBox="0 0 68 68"><path d="M0 0 H67 L0 67 Z" fill="#262a31"/></svg>
<div id="t39" class="t" style="left:146.88px;transform-origin:0 0;top:1107px;font-size:25px;color:#9a9caa;font-weight:700;transform:scaleX(1.4333);font-family:'Liberation Serif',serif;">i</div>
<div id="t40" class="t" style="left:1154.80px;transform-origin:0 0;top:1120px;font-size:27px;color:#ccccdc;font-weight:400;transform:scaleX(1.0031);-webkit-text-stroke:1.0px #ccccdc;">Cpu Usage % by Resource Pool</div>
<svg class="a" style="left:1553.0px;top:1126.0px;" width="20" height="18" viewBox="0 0 20 18"><path d="M4 5.5 L10.3 11.8 L16.6 5.5" stroke="#9a9ca6" stroke-width="2.4" fill="none"/></svg>
<svg class="a" style="left:0;top:0" width="2598" height="1779" viewBox="0 0 2598 1779"><path d="M240 1631.5 H2142.2" stroke="#2c2f34" stroke-width="1.1"/><path d="M240 1548.5 H2142.2" stroke="#2c2f34" stroke-width="1.1"/><path d="M240 1465.5 H2142.2" stroke="#2c2f34" stroke-width="1.1"/><path d="M240 1382.5 H2142.2" stroke="#2c2f34" stroke-width="1.1"/><path d="M240 1298.5 H2142.2" stroke="#2c2f34" stroke-width="1.1"/><path d="M240 1215.5 H2142.2" stroke="#2c2f34" stroke-width="1.1"/><path d="M379.5 1215.7 V1639.5" stroke="#2c2f34" stroke-width="1.1"/><path d="M537.5 1215.7 V1639.5" stroke="#2c2f34" stroke-width="1.1"/><path d="M695.5 1215.7 V1639.5" stroke="#2c2f34" stroke-width="1.1"/><path d="M853.5 1215.7 V1639.5" stroke="#2c2f34" stroke-width="1.1"/><path d="M1010.5 1215.7 V1639.5" stroke="#2c2f34" stroke-width="1.1"/><path d="M1168.5 1215.7 V1639.5" stroke="#2c2f34" stroke-width="1.1"/><path d="M1326.5 1215.7 V1639.5" stroke="#2c2f34" stroke-width="1.1"/><path d="M1484.5 1215.7 V1639.5" stroke="#2c2f34" stroke-width="1.1"/><path d="M1642.5 1215.7 V1639.5" stroke="#2c2f34" stroke-width="1.1"/><path d="M1799.5 1215.7 V1639.5" stroke="#2c2f34" stroke-width="1.1"/><path d="M1957.5 1215.7 V1639.5" stroke="#2c2f34" stroke-width="1.1"/><path d="M2115.5 1215.7 V1639.5" stroke="#2c2f34" stroke-width="1.1"/><path d="M252.3 1631.5 L252.3 1550.0 L283.8 1552.1 L315.4 1523.4 L346.9 1557.1 L378.5 1559.2 L410.1 1554.2 L441.6 1552.1 L473.2 1545.0 L504.7 1550.8 L536.3 1535.5 L567.8 1543.8 L599.4 1541.3 L630.9 1542.5 L662.5 1543.8 L694.0 1548.3 L725.6 1552.1 L757.2 1571.2 L788.7 1539.6 L820.3 1555.4 L851.8 1569.1 L883.4 1537.5 L914.9 1573.3 L946.5 1567.5 L978.0 1569.1 L1009.6 1550.8 L1041.2 1539.6 L1072.7 1486.0 L1104.3 1557.9 L1135.8 1554.6 L1167.4 1536.3 L1198.9 1546.7 L1230.5 1538.8 L1262.0 1556.2 L1293.6 1565.4 L1325.2 1557.1 L1356.7 1513.8 L1388.3 1545.0 L1419.8 1565.8 L1451.4 1545.8 L1482.9 1510.9 L1514.5 1490.5 L1546.0 1552.9 L1577.6 1567.9 L1609.1 1571.2 L1640.7 1559.6 L1672.3 1558.3 L1703.8 1520.5 L1735.4 1549.2 L1766.9 1505.9 L1798.5 1498.9 L1830.0 1537.1 L1861.6 1546.7 L1893.1 1548.3 L1924.7 1560.4 L1956.2 1544.2 L1987.8 1528.8 L2019.4 1542.1 L2050.9 1540.4 L2082.5 1507.6 L2114.0 1549.6 L2114.0 1631.5 Z" fill="#73bf69" fill-opacity="0.1"/><path d="M252.3 1550.0 L283.8 1552.1 L315.4 1523.4 L346.9 1557.1 L378.5 1559.2 L410.1 1554.2 L441.6 1552.1 L473.2 1545.0 L504.7 1550.8 L536.3 1535.5 L567.8 1543.8 L599.4 1541.3 L630.9 1542.5 L662.5 1543.8 L694.0 1548.3 L725.6 1552.1 L757.2 1571.2 L788.7 1539.6 L820.3 1555.4 L851.8 1569.1 L883.4 1537.5 L914.9 1573.3 L946.5 1567.5 L978.0 1569.1 L1009.6 1550.8 L1041.2 1539.6 L1072.7 1486.0 L1104.3 1557.9 L1135.8 1554.6 L1167.4 1536.3 L1198.9 1546.7 L1230.5 1538.8 L1262.0 1556.2 L1293.6 1565.4 L1325.2 1557.1 L1356.7 1513.8 L1388.3 1545.0 L1419.8 1565.8 L1451.4 1545.8 L1482.9 1510.9 L1514.5 1490.5 L1546.0 1552.9 L1577.6 1567.9 L1609.1 1571.2 L1640.7 1559.6 L1672.3 1558.3 L1703.8 1520.5 L1735.4 1549.2 L1766.9 1505.9 L1798.5 1498.9 L1830.0 1537.1 L1861.6 1546.7 L1893.1 1548.3 L1924.7 1560.4 L1956.2 1544.2 L1987.8 1528.8 L2019.4 1542.1 L2050.9 1540.4 L2082.5 1507.6 L2114.0 1549.6 L2114.0 1549.2 L2082.5 1507.2 L2050.9 1538.8 L2019.4 1540.9 L1987.8 1528.0 L1956.2 1542.5 L1924.7 1557.1 L1893.1 1543.8 L1861.6 1545.4 L1830.0 1535.5 L1798.5 1496.8 L1766.9 1502.2 L1735.4 1548.3 L1703.8 1520.1 L1672.3 1557.1 L1640.7 1557.9 L1609.1 1565.0 L1577.6 1564.6 L1546.0 1551.7 L1514.5 1486.8 L1482.9 1507.2 L1451.4 1544.2 L1419.8 1565.0 L1388.3 1544.2 L1356.7 1510.9 L1325.2 1552.5 L1293.6 1565.0 L1262.0 1555.0 L1230.5 1537.9 L1198.9 1545.8 L1167.4 1535.5 L1135.8 1554.2 L1104.3 1557.1 L1072.7 1478.1 L1041.2 1537.1 L1009.6 1549.2 L978.0 1567.9 L946.5 1567.1 L914.9 1572.9 L883.4 1534.2 L851.8 1567.9 L820.3 1555.0 L788.7 1539.2 L757.2 1571.2 L725.6 1550.8 L694.0 1542.9 L662.5 1542.9 L630.9 1541.7 L599.4 1540.9 L567.8 1542.5 L536.3 1533.8 L504.7 1550.0 L473.2 1542.1 L441.6 1550.8 L410.1 1549.2 L378.5 1554.2 L346.9 1550.8 L315.4 1514.2 L283.8 1547.5 L252.3 1545.8 Z" fill="#f2cc0c" fill-opacity="0.1"/><path d="M248.0 1298.1 H2142.2" stroke="#c4444f" stroke-width="2"/><path d="M248.0 1485.2 H2142.2" stroke="#c77a2c" stroke-width="2"/><path d="M252.3 1550.0 L283.8 1552.1 L315.4 1523.4 L346.9 1557.1 L378.5 1559.2 L410.1 1554.2 L441.6 1552.1 L473.2 1545.0 L504.7 1550.8 L536.3 1535.5 L567.8 1543.8 L599.4 1541.3 L630.9 1542.5 L662.5 1543.8 L694.0 1548.3 L725.6 1552.1 L757.2 1571.2 L788.7 1539.6 L820.3 1555.4 L851.8 1569.1 L883.4 1537.5 L914.9 1573.3 L946.5 1567.5 L978.0 1569.1 L1009.6 1550.8 L1041.2 1539.6 L1072.7 1486.0 L1104.3 1557.9 L1135.8 1554.6 L1167.4 1536.3 L1198.9 1546.7 L1230.5 1538.8 L1262.0 1556.2 L1293.6 1565.4 L1325.2 1557.1 L1356.7 1513.8 L1388.3 1545.0 L1419.8 1565.8 L1451.4 1545.8 L1482.9 1510.9 L1514.5 1490.5 L1546.0 1552.9 L1577.6 1567.9 L1609.1 1571.2 L1640.7 1559.6 L1672.3 1558.3 L1703.8 1520.5 L1735.4 1549.2 L1766.9 1505.9 L1798.5 1498.9 L1830.0 1537.1 L1861.6 1546.7 L1893.1 1548.3 L1924.7 1560.4 L1956.2 1544.2 L1987.8 1528.8 L2019.4 1542.1 L2050.9 1540.4 L2082.5 1507.6 L2114.0 1549.6" fill="none" stroke="#73bf69" stroke-width="2.2" stroke-linejoin="round"/><path d="M252.3 1545.8 L283.8 1547.5 L315.4 1514.2 L346.9 1550.8 L378.5 1554.2 L410.1 1549.2 L441.6 1550.8 L473.2 1542.1 L504.7 1550.0 L536.3 1533.8 L567.8 1542.5 L599.4 1540.9 L630.9 1541.7 L662.5 1542.9 L694.0 1542.9 L725.6 1550.8 L757.2 1571.2 L788.7 1539.2 L820.3 1555.0 L851.8 1567.9 L883.4 1534.2 L914.9 1572.9 L946.5 1567.1 L978.0 1567.9 L1009.6 1549.2 L1041.2 1537.1 L1072.7 1478.1 L1104.3 1557.1 L1135.8 1554.2 L1167.4 1535.5 L1198.9 1545.8 L1230.5 1537.9 L1262.0 1555.0 L1293.6 1565.0 L1325.2 1552.5 L1356.7 1510.9 L1388.3 1544.2 L1419.8 1565.0 L1451.4 1544.2 L1482.9 1507.2 L1514.5 1486.8 L1546.0 1551.7 L1577.6 1564.6 L1609.1 1565.0 L1640.7 1557.9 L1672.3 1557.1 L1703.8 1520.1 L1735.4 1548.3 L1766.9 1502.2 L1798.5 1496.8 L1830.0 1535.5 L1861.6 1545.4 L1893.1 1543.8 L1924.7 1557.1 L1956.2 1542.5 L1987.8 1528.0 L2019.4 1540.9 L2050.9 1538.8 L2082.5 1507.2 L2114.0 1549.2" fill="none" stroke="#f2cc0c" stroke-width="2.2" stroke-linejoin="round"/></svg>
<div id="t41" class="t" style="left:177.94px;transform-origin:0 0;top:1617px;font-size:24.6px;color:#ccccdc;font-weight:400;transform:scaleX(0.9273);-webkit-text-stroke:0.45px #ccccdc;">0.0%</div>
<div id="t42" class="t" style="left:163.95px;transform-origin:0 0;top:1534px;font-size:24.6px;color:#ccccdc;font-weight:400;transform:scaleX(0.9485);-webkit-text-stroke:0.45px #ccccdc;">20.0%</div>
<div id="t43" class="t" style="left:164.43px;transform-origin:0 0;top:1451px;font-size:24.6px;color:#ccccdc;font-weight:400;transform:scaleX(0.9416);-webkit-text-stroke:0.45px #ccccdc;">40.0%</div>
<div id="t44" class="t" style="left:163.95px;transform-origin:0 0;top:1368px;font-size:24.6px;color:#ccccdc;font-weight:400;transform:scaleX(0.9485);-webkit-text-stroke:0.45px #ccccdc;">60.0%</div>
<div id="t45" class="t" style="left:163.95px;transform-origin:0 0;top:1284px;font-size:24.6px;color:#ccccdc;font-weight:400;transform:scaleX(0.9485);-webkit-text-stroke:0.45px #ccccdc;">80.0%</div>
<div id="t46" class="t" style="left:149.96px;transform-origin:0 0;top:1201px;font-size:24.6px;color:#ccccdc;font-weight:400;transform:scaleX(0.9630);-webkit-text-stroke:0.45px #ccccdc;">100.0%</div>
<div id="t47" class="t" style="left:348.62px;transform-origin:0 0;top:1647px;font-size:24.6px;color:#ccccdc;font-weight:400;transform:scaleX(0.9882);-webkit-text-stroke:0.45px #ccccdc;">10:40</div>
<div id="t48" class="t" style="left:506.39px;transform-origin:0 0;top:1647px;font-size:24.6px;color:#ccccdc;font-weight:400;transform:scaleX(0.9882);-webkit-text-stroke:0.45px #ccccdc;">10:45</div>
<div id="t49" class="t" style="left:664.17px;transform-origin:0 0;top:1647px;font-size:24.6px;color:#ccccdc;font-weight:400;transform:scaleX(0.9882);-webkit-text-stroke:0.45px #ccccdc;">10:50</div>
<div id="t50" class="t" style="left:821.94px;transform-origin:0 0;top:1647px;font-size:24.6px;color:#ccccdc;font-weight:400;transform:scaleX(0.9882);-webkit-text-stroke:0.45px #ccccdc;">10:55</div>
<div id="t51" class="t" style="left:979.67px;transform-origin:0 0;top:1647px;font-size:24.6px;color:#ccccdc;font-weight:400;transform:scaleX(1.0226);-webkit-text-stroke:0.45px #ccccdc;">11:00</div>
<div id="t52" class="t" style="left:1137.44px;transform-origin:0 0;top:1647px;font-size:24.6px;color:#ccccdc;font-weight:400;transform:scaleX(1.0226);-webkit-text-stroke:0.45px #ccccdc;">11:05</div>
<div id="t53" class="t" style="left:1295.22px;transform-origin:0 0;top:1647px;font-size:24.6px;color:#ccccdc;font-weight:400;transform:scaleX(1.0226);-webkit-text-stroke:0.45px #ccccdc;">11:10</div>
<div id="t54" class="t" style="left:1452.99px;transform-origin:0 0;top:1647px;font-size:24.6px;color:#ccccdc;font-weight:400;transform:scaleX(1.0226);-webkit-text-stroke:0.45px #ccccdc;">11:15</div>
<div id="t55" class="t" style="left:1610.77px;transform-origin:0 0;top:1647px;font-size:24.6px;color:#ccccdc;font-weight:400;transform:scaleX(1.0226);-webkit-text-stroke:0.45px #ccccdc;">11:20</div>
<div id="t56" class="t" style="left:1768.54px;transform-origin:0 0;top:1647px;font-size:24.6px;color:#ccccdc;font-weight:400;transform:scaleX(1.0226);-webkit-text-stroke:0.45px #ccccdc;">11:25</div>
<div id="t57" class="t" style="left:1926.32px;transform-origin:0 0;top:1647px;font-size:24.6px;color:#ccccdc;font-weight:400;transform:scaleX(1.0226);-webkit-text-stroke:0.45px #ccccdc;">11:30</div>
<div id="t58" class="t" style="left:2084.09px;transform-origin:0 0;top:1647px;font-size:24.6px;color:#ccccdc;font-weight:400;transform:scaleX(1.0226);-webkit-text-stroke:0.45px #ccccdc;">11:35</div>
<div id="t59" class="t" style="left:2384.88px;transform-origin:0 0;top:1191px;font-size:24px;color:#6e9fff;font-weight:400;transform:scaleX(1.0112);-webkit-text-stroke:1.0px #6e9fff;">Max</div>
<div id="t60" class="t" style="left:2467.94px;transform-origin:0 0;top:1191px;font-size:24px;color:#6e9fff;font-weight:400;transform:scaleX(1.0383);-webkit-text-stroke:1.0px #6e9fff;">Mean</div>
<div class="a" style="left:2192.1px;top:1224.9px;width:354.0px;height:2.0px;background:#25272c;"></div>
<div class="a" style="left:2192.1px;top:1271.1px;width:354.0px;height:2.0px;background:#25272c;"></div>
<div class="a" style="left:2207.5px;top:1244.6px;width:28.2px;height:8.1px;background:#73bf69;border-radius:2.5px;"></div>
<div id="t61" class="t" style="left:2251.03px;transform-origin:0 0;top:1237px;font-size:24px;color:#ccccdc;font-weight:400;transform:scaleX(1.0662);-webkit-text-stroke:0.45px #ccccdc;">default</div>
<div id="t62" class="t" style="left:2365.72px;transform-origin:0 0;top:1237px;font-size:24.6px;color:#ccccdc;font-weight:400;transform:scaleX(0.9518);-webkit-text-stroke:0.45px #ccccdc;">35.0%</div>
<div id="t63" class="t" style="left:2463.35px;transform-origin:0 0;top:1237px;font-size:24.6px;color:#ccccdc;font-weight:400;transform:scaleX(0.9544);-webkit-text-stroke:0.45px #ccccdc;">20.8%</div>
<div class="a" style="left:2192.1px;top:1317.2px;width:354.0px;height:2.0px;background:#25272c;"></div>
<div class="a" style="left:2207.5px;top:1291.1px;width:28.2px;height:8.1px;background:#f2cc0c;border-radius:2.5px;"></div>
<div id="t64" class="t" style="left:2250.49px;transform-origin:0 0;top:1283px;font-size:24px;color:#ccccdc;font-weight:400;transform:scaleX(1.0724);-webkit-text-stroke:0.45px #ccccdc;">internal</div>
<div id="t65" class="t" style="left:2379.67px;transform-origin:0 0;top:1283px;font-size:24.6px;color:#ccccdc;font-weight:400;transform:scaleX(0.9321);-webkit-text-stroke:0.45px #ccccdc;">2.1%</div>
<div id="t66" class="t" style="left:2477.74px;transform-origin:0 0;top:1283px;font-size:24.6px;color:#ccccdc;font-weight:400;transform:scaleX(0.9273);-webkit-text-stroke:0.45px #ccccdc;">0.5%</div>
</section>
<section class="panel" aria-label="Wait Stats/sec">
<div class="a" style="left:134.0px;top:1707.0px;width:2430.0px;height:56.0px;background:#181b1f;border:2px solid #24262b;border-bottom:none;box-sizing:border-box;border-radius:5px 5px 0 0;"></div>
<svg class="a" style="left:134.0px;top:1707.0px;border-radius:5px 0 0 0;" width="68" height="56" viewBox="0 0 68 56"><path d="M0 0 H67 L0 67 Z" fill="#262a31"/></svg>
<div id="t67" class="t" style="left:146.88px;transform-origin:0 0;top:1715px;font-size:25px;color:#9a9caa;font-weight:700;transform:scaleX(1.4333);font-family:'Liberation Serif',serif;">i</div>
<div id="t68" class="t" style="left:1258.43px;transform-origin:0 0;top:1729px;font-size:27px;color:#ccccdc;font-weight:400;transform:scaleX(1.0599);-webkit-text-stroke:1.0px #ccccdc;">Wait Stats/sec</div>
</section>
</main>
</div>
</body></html>
